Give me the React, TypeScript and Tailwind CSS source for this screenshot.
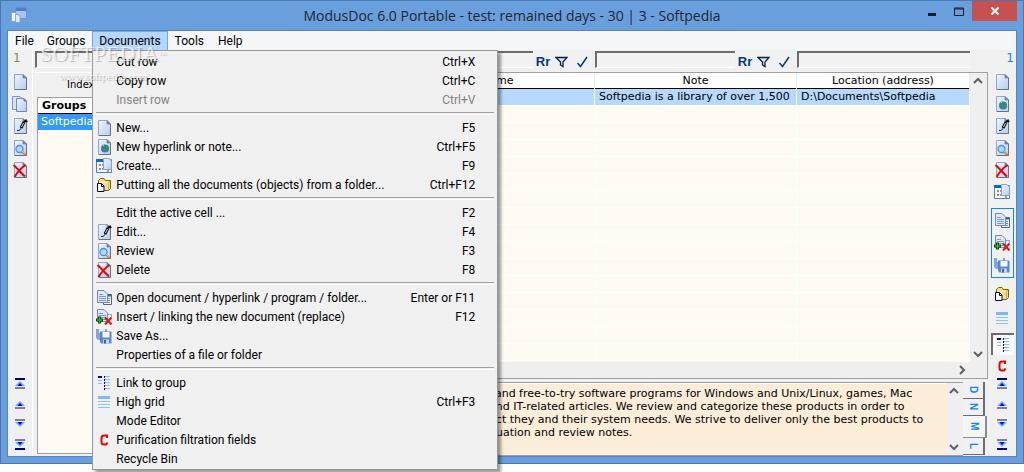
import { ReactNode } from "react";

type IconName =
  | "page" | "pages" | "web" | "edit" | "review" | "delete" | "create" | "folder"
  | "open" | "insert" | "save" | "link" | "grid" | "clear";

function Page() {
  return (
    <>
      <path d="M2.5 .5H11L14.5 4V15.5H2.5z" fill="url(#paper)" stroke="#8ea6d0" />
      <path d="M3 15.5H14.5V4" fill="none" stroke="#6b717c" />
      <path d="M11 .5V4H14.5z" fill="#6f87b2" stroke="#6b717c" strokeWidth=".6" />
    </>
  );
}

function SmallPage() {
  return (
    <>
      <path d="M1.5 .5H8L11.5 4V12.5H1.5z" fill="#dce7f7" stroke="#7289b5" />
      <path d="M3 4.5H7M3 6.5H10M3 8.5H10M3 10.5H10" stroke="#7f97c6" />
    </>
  );
}

const drawings: Record<IconName, ReactNode> = {
  page: <Page />,
  pages: (
    <>
      <path d="M.5 .5H8L11.5 4V13.5H.5z" fill="#d4e3f8" stroke="#7c97c4" />
      <path d="M4.5 2.5H12L14.5 5V15.5H4.5z" fill="url(#paper)" stroke="#7289b5" />
      <path d="M12 2.5V5H14.5" fill="#8da2c6" stroke="#5f6f8c" />
    </>
  ),
  web: (
    <>
      <Page />
      <circle cx="9" cy="9.5" r="4" fill="#3f74d8" />
      <path d="M6 8C7 5 9 5 9 7S7 10 8 12 5 11 6 8zM10 7C12 6 13 8 12.5 11S9 12 10 7z" fill="#2f9a35" />
      <path d="M7 7L8 6" stroke="#b9e6f5" />
    </>
  ),
  edit: (
    <>
      <Page />
      <path d="M5 12.5C8 13 9 11 9 9" fill="none" stroke="#222" />
      <path d="M9 10L12 4" stroke="#111" strokeWidth="3" />
      <path d="M9.5 9L11.5 5" stroke="#e8dca0" />
      <path d="M12 4L14 2.5 15 4" fill="none" stroke="#111" strokeWidth="2" />
    </>
  ),
  review: (
    <>
      <Page />
      <circle cx="7.5" cy="9" r="3.5" fill="#a9dcff" stroke="#4d8fe8" strokeWidth="1.3" />
      <path d="M10 11.5L14 15.5" stroke="#c9772b" strokeWidth="2" />
      <path d="M10 11L13 14" stroke="#f5c15f" />
    </>
  ),
  delete: (
    <>
      <Page />
      <path d="M1.5 3C5 6 9 11 13 14.5M13.5 3C9 6 5 11 2.5 15" fill="none" stroke="#f00000" strokeWidth="2" />
    </>
  ),
  create: (
    <>
      <path d="M.5 1.5H15.5V14.5H.5z" fill="#f3f7fd" stroke="#3f82d8" />
      <path d="M0 2.5H8" stroke="#0f67d4" strokeWidth="3" />
      <path d="M3 6H5V8H3z" fill="#8a8da8" />
      <path d="M3 10H5V12H3z" fill="#e5704a" />
      <path d="M11 12H13V14H11z" fill="#c79a2a" />
      <path d="M6 10H7V12H6zM6 6H7V8H6z" fill="#8f9cc0" />
      <path d="M7.5 .5H13L15.5 3V11.5H7.5z" fill="url(#paper)" stroke="#8c9fbf" />
    </>
  ),
  folder: (
    <>
      <path d="M2.5 3.5L4.5 1.5H8L9.5 3.5H14.5V11.5L12.5 13.5H2.5z" fill="#f7dc7d" stroke="#6d6100" />
      <path d="M4 5.5H12.5V13" fill="none" stroke="#fff3b5" />
      <path d="M12.5 13V5.5L14.5 3.5" fill="none" stroke="#c9ae4a" />
      <path d="M1.5 6.5H5.5L8 9V14.5H1.5z" fill="#fff" stroke="#000080" />
      <path d="M5.5 6.5V9.5H8" fill="none" stroke="#000080" />
    </>
  ),
  open: (
    <>
      <path d="M7.5 4.5H15.5V14.5H7.5z" fill="#eef3fb" stroke="#56657f" />
      <path d="M8 5.5H15" stroke="#2f62b8" strokeWidth="2" />
      <path d="M11 8.5H14M11 10.5H14M11 12.5H14" stroke="#6b86c0" />
      <SmallPage />
    </>
  ),
  insert: (
    <>
      <SmallPage />
      <path d="M9 8.5L15.5 15.5M15.5 8.5L9 15.5" stroke="#e81010" strokeWidth="2" />
      <path d="M12 5.5H15.5V9" fill="none" stroke="#8da2c6" />
      <path d="M3.5 7.5V14.5M0 11H7" stroke="#064f08" strokeWidth="3" />
      <path d="M3.5 8.5V13.5M1 11H6" stroke="#2bd32b" />
    </>
  ),
  save: (
    <>
      <path d="M0 1H11V12H2L0 10z" fill="#86a5dc" />
      <path d="M3 1H9V5H3z" fill="#e9effa" />
      <path d="M4 3.5H15.5V15.5H5.5L4 14z" fill="#5b85cd" />
      <path d="M6.5 4H13.5V9.5H6.5z" fill="#f4f8fe" />
      <path d="M7 11.5H13V15.5H7z" fill="#c8d7f1" />
      <path d="M8 12H10V15.5H8z" fill="#3c63ab" />
    </>
  ),
  link: (
    <>
      <path d="M2 2H6" stroke="#0000e0" strokeWidth="2" />
      <path d="M2 5.5H6M2 8.5H6M9 1.5H14M9 4.5H14M9 7.5H14M9 10.5H14M9 13.5H14" stroke="#84bdf8" />
      <path d="M8.5 1V15" stroke="#0000e0" strokeDasharray="2 1" />
    </>
  ),
  grid: (
    <>
      <path d="M2 3.5H14" stroke="#7db7f8" strokeWidth="3" />
      <path d="M2 7.5H14M2 10.5H14M2 13.5H14" stroke="#8dc3fb" />
    </>
  ),
  clear: (
    <path d="M11 6V3.5H8C6.5 3.5 5.5 4.5 5.5 6.5V10C5.5 12 6.5 12.5 8 12.5H10L11.5 10.5" fill="none" stroke="#f00000" strokeWidth="2" />
  ),
};

function Icon({ name }: { name: IconName }) {
  return (
    <svg className="size-4 shrink-0" viewBox="0 0 16 16" aria-hidden="true">
      {drawings[name]}
    </svg>
  );
}

function AppLogo() {
  return (
    <svg className="size-4" viewBox="0 0 16 16" aria-hidden="true">
      <path d="M4.5 .5H15.5V11.5H4.5z" fill="#a9c5f0" stroke="#6b8fcb" />
      <path d="M5 1H15V4H5z" fill="#4f80d0" />
      <path d="M.5 5.5H4L6 7.5V14.5H.5z" fill="#f2f6fd" stroke="#8fa5c9" />
      <path d="M4.5 7.5H7L9 9.5V15.5H4.5z" fill="#dfe9f8" stroke="#8fa5c9" />
    </svg>
  );
}

// Row navigation: first / previous / next / last
function Arrow({ down, end, label }: { down?: boolean; end?: boolean; label: string }) {
  return (
    <button aria-label={label} className="flex h-5 w-full items-center justify-center">
      <svg className={`h-3 w-[10px] ${down ? "rotate-180" : ""}`} viewBox="0 0 10 12">
        {end && <path d="M0 1H10" stroke="#000080" strokeWidth="2" />}
        <path d="M5 3L10 8H0z" fill="#63b0ff" />
        <path d="M5 5L7.5 8H2.5z" fill="#0000f0" />
        <path d="M0 10H10" stroke="#7a7ac4" strokeWidth="2" />
      </svg>
    </button>
  );
}

function Arrows() {
  return (
    <div className="w-full shrink-0">
      <Arrow end label="First" />
      <Arrow label="Previous" />
      <Arrow down label="Next" />
      <Arrow down end label="Last" />
    </div>
  );
}

function Tool({ name, label }: { name: IconName; label: string }) {
  return (
    <button aria-label={label} className="flex h-[22px] w-full shrink-0 items-center justify-center">
      <Icon name={name} />
    </button>
  );
}

function Chevron({ dir }: { dir: "up" | "down" | "right" }) {
  const d = { up: "M1 7L5 3L9 7", down: "M1 3L5 7L9 3", right: "M3 1L7 5L3 9" }[dir];
  return (
    <button aria-label={`Scroll ${dir}`} className="flex size-4 items-center justify-center">
      <svg className="size-[10px]" viewBox="0 0 10 10">
        <path d={d} fill="none" stroke="#606060" strokeWidth="2" />
      </svg>
    </button>
  );
}

function VScroll() {
  return (
    <div className="flex w-[17px] shrink-0 flex-col items-start justify-between bg-[#efefef]">
      <Chevron dir="up" />
      <Chevron dir="down" />
    </div>
  );
}

function FilterInput({ label }: { label: string }) {
  return (
    <input
      aria-label={label}
      className="h-[17px] min-w-0 flex-1 border-t-2 border-l-2 border-b border-t-[#6d6d6d] border-l-[#6d6d6d] border-b-white bg-[#f2f2f2] px-1 outline-none"
    />
  );
}

function FilterTools() {
  return (
    <div className="flex h-full w-[62px] shrink-0 items-center gap-1 pl-[2px] text-[#003c7c]">
      <button className="w-4 font-['Liberation_Sans'] text-[13px] font-bold">Rr</button>
      <button aria-label="Filter">
        <svg className="h-3 w-[13px]" viewBox="0 0 13 12">
          <path d="M1 1.5H12L8 6V10.5L5.5 9V6z" fill="#d5e2f3" stroke="#0b2340" strokeWidth="1.3" />
        </svg>
      </button>
      <button aria-label="Apply" className="ml-1">
        <svg className="h-3 w-[13px]" viewBox="0 0 13 12">
          <path d="M1.5 7L4.5 10.5L11 1" fill="none" stroke="#003c7c" strokeWidth="1.5" />
        </svg>
      </button>
    </div>
  );
}

interface Item {
  text: string;
  keys?: string;
  icon?: IconName;
  disabled?: boolean;
}

const menu: Item[][] = [
  [
    { text: "Cut row", keys: "Ctrl+X" },
    { text: "Copy row", keys: "Ctrl+C" },
    { text: "Insert row", keys: "Ctrl+V", disabled: true },
  ],
  [
    { text: "New...", keys: "F5", icon: "page" },
    { text: "New hyperlink or note...", keys: "Ctrl+F5", icon: "web" },
    { text: "Create...", keys: "F9", icon: "create" },
    { text: "Putting all the documents (objects) from a folder...", keys: "Ctrl+F12", icon: "folder" },
  ],
  [
    { text: "Edit the active cell ...", keys: "F2" },
    { text: "Edit...", keys: "F4", icon: "edit" },
    { text: "Review", keys: "F3", icon: "review" },
    { text: "Delete", keys: "F8", icon: "delete" },
  ],
  [
    { text: "Open document / hyperlink / program / folder...", keys: "Enter or F11", icon: "open" },
    { text: "Insert / linking the new document (replace)", keys: "F12", icon: "insert" },
    { text: "Save As...", icon: "save" },
    { text: "Properties of a file or folder" },
  ],
  [
    { text: "Link to group", icon: "link" },
    { text: "High grid", keys: "Ctrl+F3", icon: "grid" },
    { text: "Mode Editor" },
    { text: "Purification filtration fields", icon: "clear" },
    { text: "Recycle Bin" },
  ],
];

function DocumentsMenu() {
  return (
    <div
      role="menu"
      className="absolute top-[19px] left-0 z-10 w-[406px] border border-[#979797] bg-[#f0f0f0] py-px shadow-[3px_3px_3px_rgba(0,0,0,0.4)]"
    >
      {menu.map((group, g) => (
        <div key={g}>
          {g > 0 && <div className="mx-[3px] my-[3px] border-t border-b border-t-[#a0a0a0] border-b-white pt-px" />}
          {group.map((item) => (
            <button
              key={item.text}
              role="menuitem"
              disabled={item.disabled}
              className="flex h-[19px] w-full items-center whitespace-nowrap pr-[22px] pl-[3px] text-black disabled:text-[#838383]"
            >
              <span className="flex w-5 shrink-0">{item.icon && <Icon name={item.icon} />}</span>
              <span className="flex-1 text-left">{item.text}</span>
              <span>{item.keys}</span>
            </button>
          ))}
        </div>
      ))}
    </div>
  );
}

function MenuBar() {
  return (
    <nav className="flex h-[19px] shrink-0 bg-[#f5f6f8] font-['Roboto',sans-serif] text-xs text-black">
      <button className="pr-[6px] pl-[7px]">File</button>
      <button className="px-[7px]">Groups</button>
      <div className="relative">
        <button aria-expanded="true" className="h-full border border-b-0 border-[#70a8e8] bg-[#b5d7fb] px-[6px]">
          Documents
        </button>
        <DocumentsMenu />
      </div>
      <button className="px-[7px]">Tools</button>
      <button className="px-[7px]">Help</button>
    </nav>
  );
}

function TitleBar() {
  return (
    <header className="relative flex h-[29px] shrink-0 items-center justify-center">
      <div className="absolute top-[6px] left-1"><AppLogo /></div>
      <h1 className="font-['Open_Sans',sans-serif] text-sm text-[#20262e]">
        ModusDoc 6.0 Portable - test: remained days - 30 | 3 - Softpedia
      </h1>
      <div className="absolute top-0 right-0 flex h-5">
        <button aria-label="Minimize" className="flex w-[27px] items-center justify-center">
          <svg className="size-3" viewBox="0 0 12 12"><path d="M2 9.5H10" stroke="#1d1d1d" strokeWidth="3" /></svg>
        </button>
        <button aria-label="Maximize" className="flex w-[27px] items-center justify-center">
          <svg className="size-3" viewBox="0 0 12 12"><path d="M1.5 3H10.5V10.5H1.5zM1 4H11" fill="none" stroke="#1d1d1d" /></svg>
        </button>
        <button aria-label="Close" className="flex w-[45px] items-center justify-center bg-[#c75050]">
          <svg className="size-2" viewBox="0 0 8 8"><path d="M.5 .5L7.5 7.5M7.5 .5L.5 7.5" stroke="#fff" strokeWidth="2" /></svg>
        </button>
      </div>
    </header>
  );
}

function LeftTools() {
  return (
    <aside className="flex w-[25px] shrink-0 flex-col items-center border-r border-white pb-[2px]">
      <span className="mb-1 h-[17px] self-start pl-[5px] text-xs text-[#7d8a5c]">1</span>
      <Tool name="page" label="New group" />
      <Tool name="pages" label="Copy group" />
      <Tool name="edit" label="Edit group" />
      <Tool name="review" label="Review group" />
      <Tool name="delete" label="Delete group" />
      <div className="flex-1" />
      <Arrows />
    </aside>
  );
}

function RightTools() {
  return (
    <aside className="flex w-7 shrink-0 flex-col items-center pb-[2px]">
      <span className="mb-1 h-[17px] shrink-0 self-end pr-[2px] text-xs text-[#1e7ff0]">1</span>
      <Tool name="page" label="New" />
      <Tool name="web" label="New hyperlink" />
      <Tool name="edit" label="Edit" />
      <Tool name="review" label="Review" />
      <Tool name="delete" label="Delete" />
      <Tool name="create" label="Create" />
      <div className="mt-[5px] mb-[5px] w-[23px] shrink-0 border border-[#1583f0] py-px">
        <Tool name="open" label="Open" />
        <Tool name="insert" label="Insert" />
        <Tool name="save" label="Save as" />
      </div>
      <Tool name="folder" label="Add folder" />
      <div className="mt-[2px] w-full shrink-0">
        <Tool name="grid" label="High grid" />
      </div>
      <button
        aria-label="Link to group"
        aria-pressed="true"
        className="mt-1 flex h-[22px] w-[23px] shrink-0 items-center justify-center border-t-2 border-l-2 border-[#6d6d6d] bg-[#fafafa]"
      >
        <Icon name="link" />
      </button>
      <button aria-label="Clear filters" className="flex min-h-4 w-full flex-1 items-end justify-center">
        <Icon name="clear" />
      </button>
      <Arrows />
    </aside>
  );
}

function GroupsPane() {
  return (
    <section className="flex w-[214px] shrink-0 flex-col border-t border-white pb-[2px] pl-1">
      <span className="h-6 pt-1 pl-[30px] text-[10px]">Index</span>
      <div className="flex-1 border border-[#a0a0a0] bg-[#fffbf3]">
        <table className="w-full text-left leading-[15px]">
          <thead>
            <tr className="border-b border-black bg-white">
              <th className="p-0 pl-1 font-bold">Groups</th>
            </tr>
          </thead>
          <tbody>
            <tr className="h-4 bg-[#3399ff] text-white">
              <td className="p-0 pl-[3px]">Softpedia</td>
            </tr>
          </tbody>
        </table>
      </div>
    </section>
  );
}

const head = "p-0 font-normal leading-[15px]";
const cell = "overflow-hidden whitespace-nowrap border-r border-b border-white p-0 px-1 leading-4";

function DocumentsTable() {
  return (
    <div className="flex min-h-0 flex-1 flex-col border border-[#a0a0a0]">
      <div className="flex min-h-0 flex-1">
        <div className="min-w-0 flex-1 overflow-hidden bg-[#fffbf3]">
          <table className="w-full table-fixed border-collapse">
            <colgroup>
              <col />
              <col className="w-[194px]" />
              <col className="w-[202px]" />
              <col className="w-[173px]" />
            </colgroup>
            <thead>
              <tr className="border-b border-black bg-[#fdfdfd]">
                <th className={head}>Index</th>
                <th className={head}>Name</th>
                <th className={`${head} border-x border-[#e0ecf8]`}>Note</th>
                <th className={`${head} border-r border-[#e0ecf8]`}>Location (address)</th>
              </tr>
            </thead>
            <tbody>
              <tr className="h-[17px] bg-[#b7d9ff]">
                <td className={cell}>1</td>
                <td className={cell}>Softpedia</td>
                <td className={cell}>Softpedia is a library of over 1,500</td>
                <td className={cell}>D:\Documents\Softpedia</td>
              </tr>
              {Array.from({ length: 16 }, (_, i) => (
                <tr key={i} className="h-[17px]">
                  <td className={cell} />
                  <td className={cell} />
                  <td className={cell} />
                  <td className={cell} />
                </tr>
              ))}
            </tbody>
          </table>
        </div>
        <VScroll />
      </div>
      <div className="flex h-4 shrink-0 justify-end bg-[#efefef] pr-[17px]">
        <Chevron dir="right" />
      </div>
    </div>
  );
}

const note = [
  "Softpedia is a library of over 1,500,000 free and free-to-try software programs for Windows and Unix/Linux, games, Mac",
  "software, Windows drivers, mobile devices and IT-related articles. We review and categorize these products in order to",
  "allow the visitor/user to find the exact product they and their system needs. We strive to deliver only the best products to",
  "the visitor/user together with self-made evaluation and review notes.",
];

function Tab({ text, active }: { text: string; active?: boolean }) {
  return (
    <button
      className={`flex items-center justify-center border-r-2 border-b font-['Liberation_Sans'] text-[10px] font-bold text-[#1583f0] [writing-mode:vertical-rl] ${
        active ? "h-[22px] w-6 border-[#8a8a8a] bg-[#f5f5f5]" : "h-[17px] w-[22px] border-[#6d6d6d]"
      }`}
    >
      {text}
    </button>
  );
}

function NotePanel() {
  return (
    <div className="mt-[3px] flex h-[74px] shrink-0">
      <div className="flex min-w-0 flex-1 border-t border-b border-[#a0a0a0]">
        <textarea
          aria-label="Note"
          readOnly
          wrap="off"
          value={note.join("\n")}
          className="min-w-0 flex-1 resize-none overflow-hidden border-t border-white bg-[#fbedd8] pt-[3px] pl-1 leading-[13px] outline-none"
        />
        <VScroll />
      </div>
      <div className="flex w-[25px] shrink-0 flex-col">
        <Tab text="D" />
        <Tab text="N" />
        <Tab text="M" active />
        <Tab text="L" />
      </div>
    </div>
  );
}

function Watermark() {
  return (
    <div
      aria-hidden="true"
      className="pointer-events-none absolute top-[39px] left-[39px] z-20 text-center font-['Liberation_Serif',serif] text-white/70 [text-shadow:1px_1px_1px_rgba(0,0,0,0.25)]"
    >
      <div className="text-[22px] leading-7">
        SOFTPEDIA<sup className="text-[8px]">™</sup>
      </div>
      <div className="text-[11px] leading-4">www.softpedia.com</div>
    </div>
  );
}

export default function App() {
  return (
    <div className="h-screen overflow-hidden bg-white font-['DejaVu_Sans',sans-serif] text-[11px] text-black">
      <svg className="absolute size-0" aria-hidden="true">
        <defs>
          <linearGradient id="paper" x1="0" y1="0" x2="1" y2="1">
            <stop offset="0" stopColor="#eef5ff" />
            <stop offset="1" stopColor="#b4cdf3" />
          </linearGradient>
        </defs>
      </svg>
      <div className="relative flex h-[calc(100%-8px)] flex-col border border-[#4a78b0] bg-[#6a9fde] px-[6px] pb-[6px]">
        <TitleBar />
        <div className="flex min-h-0 flex-1 flex-col border border-[#5585c0] bg-[#f0f0f0]">
          <MenuBar />
          <div className="flex min-h-0 flex-1">
            <LeftTools />
            <main className="flex min-w-0 flex-1 flex-col">
              <div className="flex h-[22px] shrink-0 pt-px pr-[18px]">
                <div className="flex flex-1 pl-[2px]">
                  <FilterInput label="Index filter" />
                </div>
                <div className="flex w-[194px]">
                  <FilterInput label="Name filter" />
                  <FilterTools />
                </div>
                <div className="flex w-[202px]">
                  <FilterInput label="Note filter" />
                  <FilterTools />
                </div>
                <div className="flex w-[173px]">
                  <FilterInput label="Location filter" />
                </div>
              </div>
              <div className="flex min-h-0 flex-1">
                <GroupsPane />
                <section className="flex min-w-0 flex-1 flex-col">
                  <DocumentsTable />
                  <NotePanel />
                </section>
              </div>
            </main>
            <RightTools />
          </div>
        </div>
        <Watermark />
      </div>
    </div>
  );
}
